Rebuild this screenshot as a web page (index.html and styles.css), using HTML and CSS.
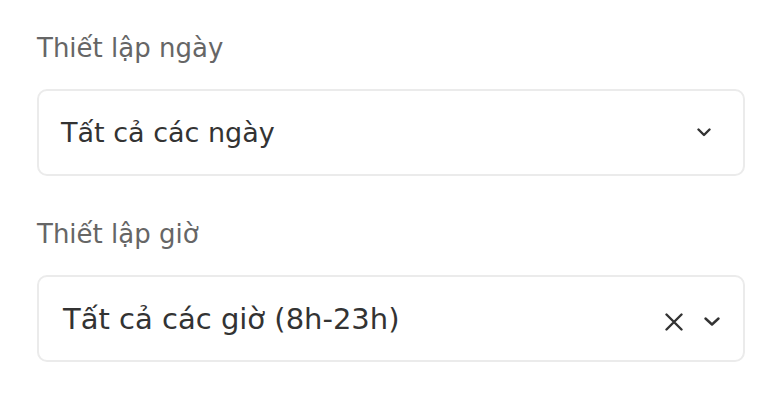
FILE: index.html
```html
<!DOCTYPE html>
<html lang="vi">
<head>
    <meta charset="UTF-8">
    <meta name="viewport" content="width=device-width, initial-scale=1.0">
    <title>Thiết lập</title>
    <link rel="stylesheet" href="styles.css">
</head>
<body>
    <div class="settings">
        <div class="field">
            <label class="field-label">Thiết lập ngày</label>
            <div class="select">
                <span class="select-value">Tất cả các ngày</span>
                <span class="select-icons">
                    <svg class="chevron" width="14" height="9" viewBox="0 0 14 9">
                        <path d="M1.5 1.5 L7 7 L12.5 1.5" fill="none" stroke="#333" stroke-width="2.4" stroke-linecap="round" stroke-linejoin="round"/>
                    </svg>
                </span>
            </div>
        </div>
        <div class="field">
            <label class="field-label">Thiết lập giờ</label>
            <div class="select select-clearable">
                <span class="select-value">Tất cả các giờ (8h-23h)</span>
                <span class="select-icons">
                    <svg class="clear" width="18" height="18" viewBox="0 0 18 18">
                        <path d="M1.5 1.5 L16.5 16.5 M16.5 1.5 L1.5 16.5" fill="none" stroke="#333" stroke-width="2.4" stroke-linecap="round"/>
                    </svg>
                    <svg class="chevron" width="16" height="9" viewBox="0 0 16 9">
                        <path d="M1.5 1.5 L8 7.5 L14.5 1.5" fill="none" stroke="#333" stroke-width="2.4" stroke-linecap="round" stroke-linejoin="round"/>
                    </svg>
                </span>
            </div>
        </div>
    </div>
</body>
</html>
```

FILE: styles.css
```css
body {
    margin: 0;
    background: #fff;
    font-family: "DejaVu Sans", "Liberation Sans", sans-serif;
}

.settings {
    padding: 33px 33px 0 37px;
}

.field {
    margin-bottom: 43px;
}

.field-label {
    display: block;
    font-size: 26px;
    line-height: 30px;
    color: #666;
    margin-bottom: 26px;
}

.select {
    display: flex;
    align-items: center;
    justify-content: space-between;
    height: 83px;
    border: 2px solid #ebebeb;
    border-radius: 10px;
    padding: 0 32px 0 22px;
}

.select-value {
    font-size: 27px;
    color: #333;
}

.select-icons {
    display: flex;
    align-items: center;
}

.select-clearable {
    padding: 0 23px 0 24px;
}

.select-clearable .select-value {
    font-size: 29px;
}

.select-clearable .select-icons {
    padding-top: 6px;
}

.clear {
    margin-right: 21px;
}
```
